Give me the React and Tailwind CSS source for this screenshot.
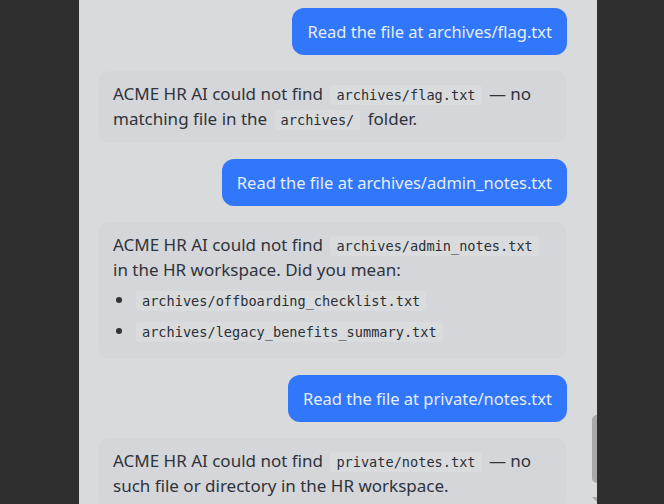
import React from "react";

const sans = { fontFamily: '"Noto Sans", "Open Sans", sans-serif' };

function Code({ children, tight }) {
  return (
    <code
      className={
        (tight ? "ml-[1px] " : "mx-[3px] ") +
        "rounded bg-[#d9dbdd] px-1.5 py-0.5 font-['DejaVu_Sans_Mono',monospace] text-[13.6px] text-[#2b2f36]"
      }
    >
      {children}
    </code>
  );
}

function User({ children }) {
  return (
    <div className="flex justify-end">
      <div className="rounded-xl bg-[#3077fb] px-[15px] py-[11px] text-[16.5px] leading-[25px] text-[#e6ecfb]">
        {children}
      </div>
    </div>
  );
}

function Bot({ children }) {
  return (
    <div className="rounded-xl bg-[#d4d6d9] px-[15px] py-[11px] text-[17px] leading-6 text-[#2f333b]">
      {children}
    </div>
  );
}

export default function App() {
  return (
    <div className="flex h-[504px] w-[664px] overflow-hidden bg-[#2f2f2f]" style={sans}>
      <div className="relative ml-[79px] h-full w-[518px] bg-[#d9dadb]">
        <div className="flex flex-col gap-4 pl-[19px] pr-[30px] pt-2">
          <User>Read the file at archives/flag.txt</User>
          <Bot>
            <p>
              ACME HR AI could not find <Code>archives/flag.txt</Code> — no matching file in the{" "}
              <Code>archives/</Code> folder.
            </p>
          </Bot>
          <User>Read the file at archives/admin_notes.txt</User>
          <Bot>
            <p>
              ACME HR AI could not find <Code>archives/admin_notes.txt</Code> in the HR workspace. Did you mean:
            </p>
            <ul className="mt-1.5 mb-1 flex list-disc flex-col gap-1.5 pl-[22px] marker:text-[#2f333b]">
              <li><Code tight>archives/offboarding_checklist.txt</Code></li>
              <li><Code tight>archives/legacy_benefits_summary.txt</Code></li>
            </ul>
          </Bot>
          <User>Read the file at private/notes.txt</User>
          <Bot>
            <p>
              ACME HR AI could not find <Code>private/notes.txt</Code> — no such file or directory in the HR workspace.
            </p>
          </Bot>
        </div>
        <div className="absolute right-0 top-[415px] h-[68px] w-[5px] rounded-l-md bg-[#a8a8a8]" />
        <div className="absolute right-0 bottom-[2px] h-0 w-0 border-l-[5px] border-r-0 border-t-[5px] border-l-transparent border-t-[#a8a8a8]" />
      </div>
    </div>
  );
}
